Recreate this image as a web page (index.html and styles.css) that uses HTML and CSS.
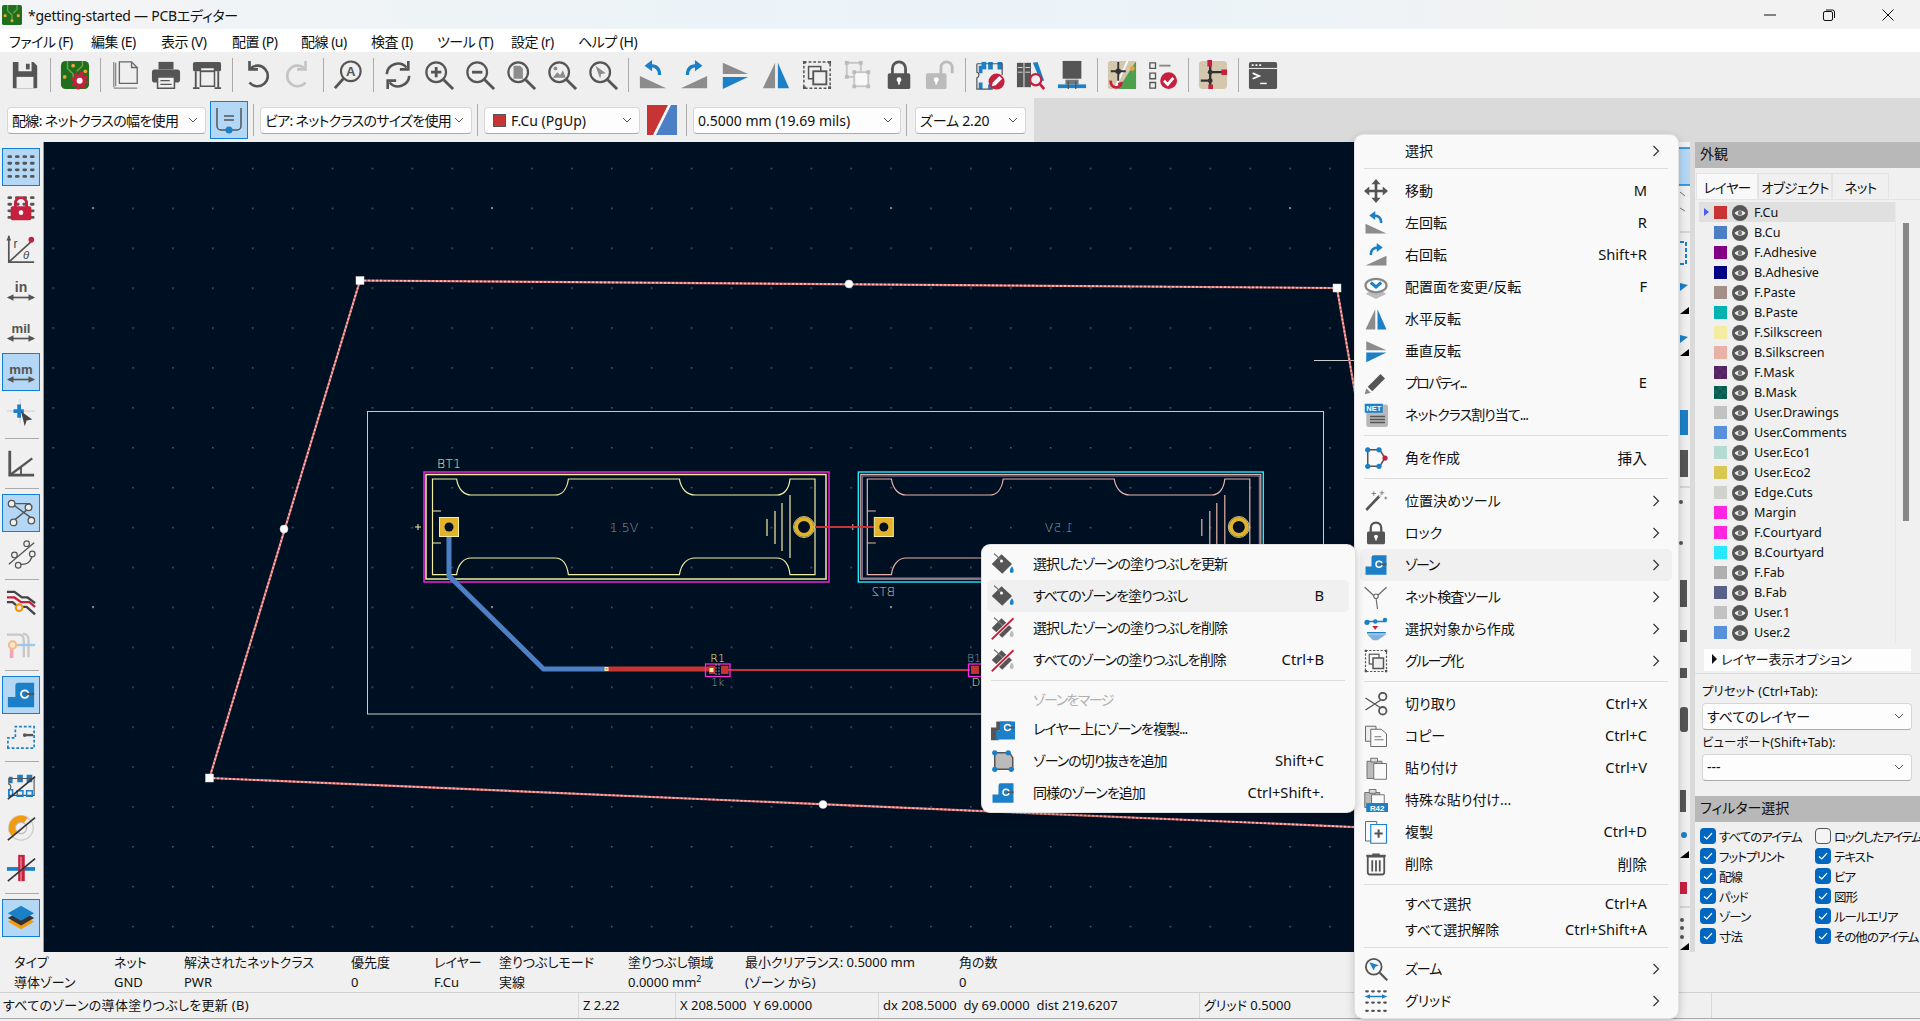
FILE: index.html
```html
<!DOCTYPE html>
<html lang="ja">
<head>
  <meta charset="utf-8">
  <title>*getting-started — PCBエディター</title>
  <link rel="stylesheet" href="styles.css">
</head>
<body>
<!-- icon sheet -->
<svg class="sheet">
  <symbol id="i-save" viewBox="0 0 32 32"><path d="M3 2h22l4 4v23a1 1 0 0 1-1 1H4a1 1 0 0 1-1-1z" fill="#555"/><path d="M9 2h14v10H9z" fill="#efefef"/><path d="M17 4h4v6h-4z" fill="#555"/><path d="M7 18h18v12H7z" fill="#efefef"/></symbol>
  <symbol id="i-pcbgear" viewBox="0 0 32 32"><rect x="1" y="1" width="30" height="30" rx="5" fill="#1f6f1f"/><path d="M8 1v8l6 6v5M24 1v5l-6 6" fill="none" stroke="#6da544" stroke-width="1.5"/><circle cx="5" cy="18" r="2" fill="#e8a33a"/><circle cx="14" cy="6" r="2" fill="#e8a33a"/><circle cx="27" cy="12" r="2" fill="#e8a33a"/><circle cx="21" cy="22" r="8" fill="none" stroke="#c7203f" stroke-width="3" stroke-dasharray="3.5 2.8"/><circle cx="21" cy="22" r="5" fill="#fff" stroke="#c7203f" stroke-width="3.6"/></symbol>
  <symbol id="i-page" viewBox="0 0 32 32"><path d="M10 2h13l6 6v17H10z" fill="none" stroke="#666" stroke-width="1.4"/><path d="M6 3v25M4 30h25M4 2v27" fill="none" stroke="#888" stroke-width="1.4"/><path d="M23 2v6h6" fill="none" stroke="#666" stroke-width="1.4"/></symbol>
  <symbol id="i-print" viewBox="0 0 32 32"><path d="M8 2h16v8H8z" fill="#555"/><rect x="1" y="10" width="30" height="14" rx="3" fill="#555"/><path d="M7 18h18v12H7z" fill="#efefef" stroke="#555" stroke-width="1.6"/><path d="M10 22h10M10 26h12" stroke="#555" stroke-width="1.2"/></symbol>
  <symbol id="i-plot" viewBox="0 0 32 32"><rect x="1" y="2" width="30" height="10" rx="2" fill="#555"/><path d="M4 12v17M28 12v17M1 30h7M24 30h7" stroke="#555" stroke-width="2" fill="none"/><path d="M9 8h15v20H9z" fill="#efefef" stroke="#555" stroke-width="1.6"/><path d="M9 12h15" stroke="#555" stroke-width="2"/></symbol>
  <symbol id="i-undo" viewBox="0 0 32 32"><path d="M9 9a11 11 0 1 1-1 15" fill="none" stroke="currentColor" stroke-width="2.8"/><path d="M8 1v9h9" fill="none" stroke="currentColor" stroke-width="2.8"/></symbol>
  <symbol id="i-redo" viewBox="0 0 32 32"><path d="M23 9a11 11 0 1 0 1 15" fill="none" stroke="currentColor" stroke-width="2.8"/><path d="M24 1v9h-9" fill="none" stroke="currentColor" stroke-width="2.8"/></symbol>
  <symbol id="i-find" viewBox="0 0 32 32"><circle cx="19" cy="12" r="10.5" fill="none" stroke="#555" stroke-width="2.2"/><path d="M11 20l-9 10" stroke="#555" stroke-width="3"/><text x="19" y="17" class="svgt" font-size="14" font-weight="700" text-anchor="middle" fill="#555">A</text></symbol>
  <symbol id="i-refresh" viewBox="0 0 32 32"><path d="M4 15A12 12 0 0 1 25 8M28 17A12 12 0 0 1 7 24" fill="none" stroke="#555" stroke-width="2.8"/><path d="M27 1v9h-9M5 31v-9h9" fill="none" stroke="#555" stroke-width="2.8"/></symbol>
  <symbol id="i-lens" viewBox="0 0 32 32"><circle cx="13" cy="13" r="10.5" fill="none" stroke="#555" stroke-width="2.4"/><path d="M21 21l10 10" stroke="#555" stroke-width="3"/></symbol>
  <symbol id="i-zin" viewBox="0 0 32 32"><use href="#i-lens"/><path d="M7.5 13h11M13 7.500v11" stroke="#555" stroke-width="3"/></symbol>
  <symbol id="i-zout" viewBox="0 0 32 32"><use href="#i-lens"/><path d="M7.500 13h11" stroke="#555" stroke-width="3"/></symbol>
  <symbol id="i-zfit" viewBox="0 0 32 32"><use href="#i-lens"/><path d="M8 6h7l3 3v11H8z" fill="#8c8c8c"/></symbol>
  <symbol id="i-zobj" viewBox="0 0 32 32"><use href="#i-lens"/><path d="M6 19l5-6 3 3 3-5 3 8z" fill="#8c8c8c"/><circle cx="9" cy="9" r="2" fill="#8c8c8c"/></symbol>
  <symbol id="i-zsel" viewBox="0 0 32 32"><use href="#i-lens"/><path d="M8 6l11 8-5 1-1 5z" fill="#8c8c8c"/></symbol>
  <symbol id="i-rotl" viewBox="0 0 32 32"><path d="M2 30V17l28 13z" fill="#8c8c8c"/><path d="M23 16c0-7-4-10-10-10" fill="none" stroke="#1b80c8" stroke-width="3.5"/><path d="M15 0L7 6l8 6z" fill="#1b80c8"/></symbol>
  <symbol id="i-rotr" viewBox="0 0 32 32"><path d="M30 30V17L2 30z" fill="#8c8c8c"/><path d="M9 16c0-7 4-10 10-10" fill="none" stroke="#1b80c8" stroke-width="3.5"/><path d="M17 0l8 6-8 6z" fill="#1b80c8"/></symbol>
  <symbol id="i-flipv" viewBox="0 0 32 32"><path d="M3 3l27 12H3z" fill="#8c8c8c"/><path d="M3 18h27L3 31z" fill="#1b80c8"/></symbol>
  <symbol id="i-fliph" viewBox="0 0 32 32"><path d="M15 3v27H2z" fill="#8c8c8c"/><path d="M18 3v27h12z" fill="#1b80c8"/></symbol>
  <symbol id="i-group" viewBox="0 0 32 32"><rect x="2" y="2" width="28" height="28" fill="none" stroke="#555" stroke-width="1.6" stroke-dasharray="3 2"/><path d="M1 1h3v3H1zM28 1h3v3h-3zM1 28h3v3H1zM28 28h3v3h-3z" fill="#555"/><rect x="7" y="7" width="13" height="13" fill="none" stroke="#555" stroke-width="1.6"/><rect x="12" y="12" width="14" height="14" fill="#efefef" stroke="#555" stroke-width="2"/></symbol>
  <symbol id="i-ungroup" viewBox="0 0 32 32"><rect x="4" y="3" width="15" height="15" fill="none" stroke="#c6c6c6" stroke-width="2"/><rect x="12" y="13" width="15" height="15" fill="#f8f8f8" stroke="#c6c6c6" stroke-width="2"/><path d="M2 1h4v4H2zM17 1h4v4h-4zM2 16h4v4H2zM10 11h4v4h-4zM25 11h4v4h-4zM10 26h4v4h-4zM25 26h4v4h-4z" fill="#bbb"/></symbol>
  <symbol id="i-lock" viewBox="0 0 32 32"><path d="M9 15V9a7 7 0 0 1 14 0v6" fill="none" stroke="#555" stroke-width="3"/><rect x="4" y="14" width="24" height="17" rx="2" fill="#555"/><circle cx="16" cy="21" r="2.6" fill="#fff"/><path d="M15 21h2v5h-2z" fill="#fff"/></symbol>
  <symbol id="i-unlock" viewBox="0 0 32 32"><path d="M17 15V8a6 6 0 0 1 12 0v6" fill="none" stroke="#bbb" stroke-width="3"/><rect x="1" y="14" width="22" height="17" rx="2" fill="#bbb"/><circle cx="12" cy="21" r="2.600" fill="#fff"/><path d="M11 21h2v5h-2z" fill="#fff"/></symbol>
  <symbol id="i-fped" viewBox="0 0 32 32"><path d="M4 6h4v8h-4zM14 2h5v8h-5zM24 2h5v8h-5zM4 24h4v7H4zM14 26h5v5h-5z" fill="#1b80c8" /><path d="M2 4h27v12M2 4v9c3 1 3 5 0 6v12h17" fill="none" stroke="#555" stroke-width="1.3"/><path d="M7 2h5v8H7z" fill="#1b80c8"/><circle cx="23" cy="23" r="8.500" fill="#c7203f"/><path d="M18 28l1-4 7-7 3 3-7 7z" fill="#fff"/></symbol>
  <symbol id="i-lib" viewBox="0 0 32 32"><rect x="1" y="3" width="7" height="26" fill="#555"/><rect x="9" y="3" width="7" height="26" fill="#555"/><path d="M18 3l5-1 7 20h-4z" fill="#1b80c8"/><path d="M2 8h5M2 13h5M10 8h5M10 13h5" stroke="#ddd"/><circle cx="21" cy="21" r="6" fill="#efefef" stroke="#c7203f" stroke-width="2.4"/><path d="M25 25l5 6" stroke="#c7203f" stroke-width="3"/></symbol>
  <symbol id="i-fp" viewBox="0 0 32 32"><path d="M6 1h20v19H6z" fill="#555"/><path d="M9 21h14v5H9z" fill="#777"/><path d="M1 26h30v4H1z" fill="#1b80c8"/><path d="M12 23v8M20 23v8" stroke="#555" stroke-width="1.4"/></symbol>
  <symbol id="i-update" viewBox="0 0 32 32"><rect x="1" y="1" width="30" height="30" rx="3" fill="#d3c7ae"/><path d="M31 1v30H12z" fill="#4ea04e"/><path d="M22 1L8 31" stroke="#fff" stroke-width="2"/><path d="M12 2v9M4 12h16M12 14v8" stroke="#333" stroke-width="2"/><circle cx="12" cy="12" r="3" fill="#333"/><circle cx="27" cy="9" r="2.600" fill="#e8a33a"/><path d="M4 22c-1 8 10 10 11 3l-3 1" fill="none" stroke="#c7203f" stroke-width="3"/></symbol>
  <symbol id="i-drc" viewBox="0 0 32 32"><path d="M2 3h6v6H2zM2 14h6v6H2zM2 24h6v6H2z" fill="none" stroke="#555" stroke-width="1.4"/><path d="M12 6h12" stroke="#888" stroke-width="2"/><circle cx="22" cy="22" r="9" fill="#c7203f"/><path d="M17 22l4 4 6-7" fill="none" stroke="#fff" stroke-width="3"/></symbol>
  <symbol id="i-sch" viewBox="0 0 32 32"><rect x="1" y="1" width="30" height="30" rx="4" fill="#d3c7ae"/><path d="M13 3v26M3 22h10M13 13h15" stroke="#333" stroke-width="2.500" fill="none"/><path d="M10 0h5v7h-5zM25 10h6v6h-6zM11 26h5v5h-5z" fill="#c7203f"/><circle cx="13" cy="13" r="2.600" fill="#333"/><circle cx="13" cy="22" r="2.600" fill="#333"/></symbol>
  <symbol id="i-term" viewBox="0 0 32 32"><rect x="1" y="2" width="30" height="29" rx="2" fill="#555"/><path d="M1 9h30" stroke="#fff"/><path d="M4 5.500h2M8 5.500h2M12 5.500h2" stroke="#fff" stroke-width="2"/><path d="M5 14l7 3-7 3" fill="none" stroke="#fff" stroke-width="1.800"/><path d="M13 25h7" stroke="#fff" stroke-width="1.600"/></symbol>

  <symbol id="i-dots" viewBox="0 0 32 32"><path d="M3 5h2M11 5h2M19 5h2M27 5h2M3 12h2M11 12h2M19 12h2M27 12h2M3 19h2M11 19h2M19 19h2M27 19h2M3 26h2M11 26h2M19 26h2M27 26h2" stroke="#555" stroke-width="3" stroke-linecap="round"/></symbol>
  <symbol id="i-gridlock" viewBox="0 0 32 32"><use href="#i-dots"/><path d="M10 15v-4a6 6 0 0 1 12 0v4" fill="none" stroke="#c7203f" stroke-width="3"/><rect x="5" y="14" width="22" height="15" rx="2" fill="#c7203f"/><circle cx="16" cy="21" r="2.500" fill="#fff"/></symbol>
  <symbol id="i-polar" viewBox="0 0 32 32"><path d="M3 2v28h27M3 30L28 7" fill="none" stroke="#555" stroke-width="1.800"/><path d="M3 1l-2.500 6h5z" fill="#555"/><circle cx="27" cy="6" r="3" fill="#c7203f"/><text x="8" y="15" class="svgt" font-size="13" fill="#444">r</text><text x="18" y="27" class="svgt" font-size="12" font-style="italic" fill="#444">θ</text></symbol>
  <symbol id="i-arrow2" viewBox="0 0 32 32"><path d="M3 24h26" stroke="#555" stroke-width="1.800"/><path d="M1 24l7-3.500v7zM31 24l-7-3.500v7z" fill="#555"/></symbol>
  <symbol id="i-in" viewBox="0 0 32 32"><use href="#i-arrow2"/><text x="16" y="18" class="svgt" font-size="15" font-weight="700" text-anchor="middle" fill="#555">in</text></symbol>
  <symbol id="i-mil" viewBox="0 0 32 32"><use href="#i-arrow2"/><text x="16" y="18" class="svgt" font-size="14" font-weight="700" text-anchor="middle" fill="#555">mil</text></symbol>
  <symbol id="i-mm" viewBox="0 0 32 32"><use href="#i-arrow2"/><text x="16" y="18" class="svgt" font-size="14" font-weight="700" text-anchor="middle" fill="#555">mm</text></symbol>
  <symbol id="i-cursor" viewBox="0 0 32 32"><path d="M1 14h30M15 1v26" stroke="#ccc"/><path d="M8 12h11v4H8zM12 7h4v14h-4z" fill="#1b80c8"/><path d="M16 14l12 9-6 1-2 6z" fill="#444"/></symbol>
  <symbol id="i-origin" viewBox="0 0 32 32"><path d="M4 3v26h26" fill="none" stroke="#555" stroke-width="3"/><path d="M4 29L28 11" stroke="#555" stroke-width="2.500"/><path d="M16 20v9" stroke="#555" stroke-width="2"/></symbol>
  <symbol id="i-rats" viewBox="0 0 32 32"><path d="M6 6l22 16M6 26L28 8M6 6h20" fill="none" stroke="#555" stroke-width="1.500"/><circle cx="6" cy="6" r="3.500" fill="#efefef" stroke="#555" stroke-width="1.400"/><circle cx="24" cy="10" r="3.500" fill="#efefef" stroke="#555" stroke-width="1.400"/><circle cx="8" cy="26" r="3.500" fill="#efefef" stroke="#555" stroke-width="1.400"/><circle cx="27" cy="24" r="3.500" fill="#efefef" stroke="#555" stroke-width="1.400"/></symbol>
  <symbol id="i-curve" viewBox="0 0 32 32"><path d="M3 27L30 4" stroke="#555" stroke-width="1.400"/><path d="M11 27h6c8 0 11-6 11-12" fill="none" stroke="#555" stroke-width="1.400"/><circle cx="22" cy="5" r="3" fill="#efefef" stroke="#555" stroke-width="1.300"/><circle cx="9" cy="17" r="3" fill="#efefef" stroke="#555" stroke-width="1.300"/><circle cx="13" cy="28" r="3" fill="#efefef" stroke="#555" stroke-width="1.300"/><circle cx="28" cy="16" r="3" fill="#efefef" stroke="#555" stroke-width="1.300"/></symbol>
  <symbol id="i-tracks" viewBox="0 0 32 32"><path d="M1 3h8l8 6h6l8 6M1 14h6l6 5h9l9 8" fill="none" stroke="#444" stroke-width="2.500"/><path d="M1 9h8l7 5h9l6 5" fill="none" stroke="#c7203f" stroke-width="2.500"/><circle cx="14" cy="20" r="3.500" fill="#efefef" stroke="#f39a0f" stroke-width="2.400"/></symbol>
  <symbol id="i-ghost" viewBox="0 0 32 32"><path d="M1 5h13c4 0 5 3 5 7v17M24 29V10c0-4-3-6-6-6" fill="none" stroke="#c8c8c8" stroke-width="2.500"/><path d="M12 16h19" stroke="#9cc8ec" stroke-width="2.500"/><path d="M6 20v10" stroke="#f0a8b8" stroke-width="4"/><circle cx="7" cy="16" r="4" fill="#fbe7d0" stroke="#f5b97f" stroke-width="2"/></symbol>
  <symbol id="i-zone" viewBox="0 0 32 32"><path d="M2 29V18h8V6a3 3 0 0 1 3-3h17v26z" fill="#1b80c8"/><circle cx="20" cy="15" r="4" fill="#1b80c8" stroke="#fff" stroke-width="2"/><path d="M21 15h9" stroke="#555" stroke-width="2.500"/></symbol>
  <symbol id="i-zonedash" viewBox="0 0 32 32"><path d="M2 29V18h8V6h20v23z" fill="none" stroke="#1b80c8" stroke-width="1.800" stroke-dasharray="3 2"/><circle cx="20" cy="15" r="2" fill="#555"/><path d="M20 15h9" stroke="#555" stroke-width="2.500"/></symbol>
  <symbol id="i-slash" viewBox="0 0 32 32"><path d="M2 30L31 6" stroke="#333" stroke-width="1.800"/></symbol>
  <symbol id="i-nofp" viewBox="0 0 32 32"><path d="M3 6h4v7H3zM12 4h6v8h-6zM22 4h6v8h-6z" fill="#1b80c8"/><path d="M3 8h27v18H3v-6c3-1 3-5 0-6z" fill="none" stroke="#555" stroke-width="1.200"/><path d="M3 20h4v7H3zM12 21h6v6h-6zM22 21h6v6h-6z" fill="none" stroke="#1b80c8" stroke-width="1.600"/><use href="#i-slash"/></symbol>
  <symbol id="i-nopad" viewBox="0 0 32 32"><circle cx="16" cy="17" r="13" fill="none" stroke="#ccc" stroke-width="1.400"/><path d="M3 17a13 13 0 0 1 20-11l-4 6a6 6 0 0 0-9 6l-7 3z" fill="#f39a0f"/><path d="M3 18a13 13 0 0 0 3 7l7-4a6 6 0 0 1-3-4z" fill="#f39a0f"/><circle cx="16" cy="17" r="6" fill="none" stroke="#bbb" stroke-width="1.400"/><use href="#i-slash"/></symbol>
  <symbol id="i-novia" viewBox="0 0 32 32"><path d="M1 17h30" stroke="#1b80c8" stroke-width="4"/><path d="M13 2h7v28h-7z" fill="#c7203f"/><path d="M16 4v26" stroke="#f0c0c8" stroke-width="1"/><use href="#i-slash"/></symbol>
  <symbol id="i-layers" viewBox="0 0 32 32"><path d="M16 12l14 8-14 8-14-8z" fill="#f39a0f"/><path d="M16 8l14 8-14 8-14-8z" fill="#333"/><path d="M16 3l14 8-14 8-14-8z" fill="#1b80c8"/></symbol>

  <symbol id="i-move" viewBox="0 0 32 32"><path d="M16 0l-6 7h12zM16 32l-6-7h12zM0 16l7-6v12zM32 16l-7-6v12z" fill="#555"/><path d="M6 16h20M16 6v20" stroke="#555" stroke-width="3.500"/></symbol>
  <symbol id="i-flip" viewBox="0 0 32 32"><path d="M16 18l14 7-14 7-14-7z" fill="#bbb"/><ellipse cx="16" cy="14" rx="14" ry="9" fill="#fff" stroke="#888" stroke-width="3"/><path d="M9 10l7 6 7-6" fill="none" stroke="#1b80c8" stroke-width="4"/></symbol>
  <symbol id="i-pencil" viewBox="0 0 32 32"><path d="M5 21L22 4l6 6-17 17z" fill="#555"/><path d="M3 23l6 6-8 2z" fill="#888"/></symbol>
  <symbol id="i-net" viewBox="0 0 32 32"><rect x="3" y="2" width="29" height="30" rx="3" fill="#b8b8b8"/><rect x="1" y="1" width="24" height="12" fill="#1b80c8"/><text x="13" y="11" class="svgt" font-size="10" font-weight="700" text-anchor="middle" fill="#fff">NET</text><path d="M8 18h20M8 22h20M8 26h20" stroke="#555" stroke-width="2"/></symbol>
  <symbol id="i-corner" viewBox="0 0 32 32"><path d="M5 5h16l7 11-7 11H5z" fill="none" stroke="#555" stroke-width="2"/><circle cx="5" cy="5" r="3.500" fill="#1b80c8"/><circle cx="5" cy="27" r="3.500" fill="#1b80c8"/><circle cx="20" cy="5" r="3.500" fill="#1b80c8"/><circle cx="20" cy="27" r="3.500" fill="#1b80c8"/><circle cx="28" cy="16" r="3.500" fill="#c7203f"/></symbol>
  <symbol id="i-wand" viewBox="0 0 32 32"><path d="M3 28L21 9" stroke="#555" stroke-width="3.500"/><path d="M20 10l3-3" stroke="#ddd" stroke-width="3"/><path d="M10 6h6M13 3v6M24 2v6M21 5h6M27 12h4M29 10v4" stroke="#666" stroke-width="1"/></symbol>
  <symbol id="i-netinsp" viewBox="0 0 32 32"><path d="M15 16L1 3M16 16l14-13M16 17l2 15" stroke="#666" stroke-width="1.500"/><circle cx="16" cy="15" r="3" fill="#fff" stroke="#666" stroke-width="1.500"/></symbol>
  <symbol id="i-create" viewBox="0 0 32 32"><path d="M3 6h26" stroke="#1b80c8" stroke-width="2"/><circle cx="4" cy="7" r="3.500" fill="#1b80c8"/><circle cx="15" cy="6" r="3" fill="#1b80c8"/><circle cx="28" cy="4" r="3" fill="#1b80c8"/><path d="M11 12h8l-4 5z" fill="#c7203f"/><path d="M4 20h25v2H4z" fill="#1b80c8"/><path d="M4 23h26L18 31h-6z" fill="#7fb3dd"/></symbol>
  <symbol id="i-cut" viewBox="0 0 32 32"><path d="M2 8l20 13M2 24l20-13" stroke="#555" stroke-width="1.800"/><circle cx="25" cy="6" r="5" fill="none" stroke="#555" stroke-width="2.400"/><circle cx="25" cy="25" r="5" fill="none" stroke="#555" stroke-width="2.400"/></symbol>
  <symbol id="i-copy" viewBox="0 0 32 32"><path d="M2 3h14v20H2z" fill="#eee" stroke="#666" stroke-width="1.300"/><path d="M9 7h14l7 6v17H9z" fill="#fafafa" stroke="#666" stroke-width="1.300"/><path d="M14 17h9M14 21h12" stroke="#666" stroke-width="1.200"/></symbol>
  <symbol id="i-paste" viewBox="0 0 32 32"><path d="M4 7h20v23H4z" fill="#bbb" stroke="#666" stroke-width="1.200"/><path d="M9 3h9v5H9z" fill="#ddd" stroke="#666" stroke-width="1.200"/><path d="M13 10h17v21H13z" fill="#fafafa" stroke="#666" stroke-width="1.200"/></symbol>
  <symbol id="i-pastesp" viewBox="0 0 32 32"><path d="M1 6h20v20H1z" fill="#bbb" stroke="#666" stroke-width="1.200"/><path d="M7 2h9v5H7z" fill="#ddd" stroke="#666" stroke-width="1.200"/><path d="M10 9h17v14H10z" fill="#fafafa" stroke="#666" stroke-width="1.200"/><rect x="3" y="20" width="29" height="12" fill="#1b80c8"/><text x="17.500" y="30" class="svgt" font-size="10.500" font-weight="700" text-anchor="middle" fill="#fff">R42</text></symbol>
  <symbol id="i-dup" viewBox="0 0 32 32"><path d="M2 2h15v26H2z" fill="#fafafa" stroke="#666" stroke-width="1.300"/><path d="M9 6h21v25H9z" fill="#fafafa" stroke="#1b80c8" stroke-width="1.500"/><path d="M14 18h11M19.500 12.500v11" stroke="#555" stroke-width="2.800"/></symbol>
  <symbol id="i-trash" viewBox="0 0 32 32"><path d="M5 6h22v21a3 3 0 0 1-3 3H8a3 3 0 0 1-3-3z" fill="none" stroke="#555" stroke-width="2.400"/><path d="M3 5h26" stroke="#555" stroke-width="2.600"/><path d="M11 3h10" stroke="#555" stroke-width="2"/><path d="M11 11v15M16 11v15M21 11v15" stroke="#555" stroke-width="2.400"/></symbol>
  <symbol id="i-zcur" viewBox="0 0 32 32"><use href="#i-lens"/><path d="M7 7l13 4-5 2-2 5z" fill="#1b80c8"/></symbol>
  <symbol id="i-gridm" viewBox="0 0 32 32"><path d="M3 3h2M11 3h2M19 3h2M27 3h2M3 18h2M11 18h2M19 18h2M27 18h2M3 29h2M11 29h2M19 29h2M27 29h2" stroke="#555" stroke-width="3" stroke-linecap="round"/><path d="M6 10h20" stroke="#1b80c8" stroke-width="2"/><path d="M1 10l7-3v6zM31 10l-7-3v6z" fill="#1b80c8"/></symbol>
  <symbol id="i-bucket" viewBox="0 0 32 32"><path d="M1 16L14 3l14 13-13 13z" fill="#555"/><path d="M4 2l12 11" stroke="#777" stroke-width="1.500"/><circle cx="14" cy="12" r="2" fill="#fff"/><path d="M28 19c3 4 3 9-.5 9s-3-5 .5-9z" fill="#1b80c8"/></symbol>
  <symbol id="i-unfill" viewBox="0 0 32 32"><path d="M1 16L14 3l14 13-13 13z" fill="#555"/><path d="M4 2l12 11" stroke="#777" stroke-width="1.500"/><path d="M28 19c3 4 3 9-.5 9s-3-5 .5-9z" fill="#bbb"/><path d="M1 31L30 3" stroke="#fafafa" stroke-width="5"/><path d="M1 31L30 3" stroke="#c7203f" stroke-width="2.400"/></symbol>
  <symbol id="i-zonedup" viewBox="0 0 32 32"><path d="M0 14h7V6h20v12H10v13H0z" fill="#555"/><path d="M7 29V18h5V6h20v24H7z" fill="#1b80c8"/><circle cx="22" cy="14" r="4" fill="#1b80c8" stroke="#fff" stroke-width="2"/><path d="M23 14h8" stroke="#555" stroke-width="2.500"/></symbol>
  <symbol id="i-cutout" viewBox="0 0 32 32"><path d="M5 5h20l4 7v15H5z" fill="#bbb" stroke="#555" stroke-width="2"/><circle cx="5" cy="5" r="3.500" fill="#1b80c8"/><circle cx="23" cy="5" r="3.500" fill="#1b80c8"/><circle cx="5" cy="27" r="3.500" fill="#1b80c8"/><circle cx="27" cy="27" r="3.500" fill="#1b80c8"/></symbol>

  <symbol id="i-eye" viewBox="0 0 16 16"><circle cx="8" cy="8" r="8" fill="#555"/><path d="M2.500 8C5 4.500 11 4.500 13.500 8 11 11.500 5 11.500 2.500 8z" fill="#eee"/><circle cx="8" cy="8" r="2.200" fill="#777"/></symbol>
  <symbol id="i-check" viewBox="0 0 16 16"><path d="M4 8.500l2.800 2.500L12 5.200" fill="none" stroke="#fff" stroke-width="1.200"/></symbol>
  <symbol id="i-chev" viewBox="0 0 12 12"><path d="M2 4l4 4 4-4" fill="none" stroke="#555" stroke-width="1"/></symbol>
  <symbol id="i-more" viewBox="0 0 8 12"><path d="M1.500 1l5 5-5 5" fill="none" stroke="#333" stroke-width="1.200"/></symbol>
</svg>

<header class="titlebar">
  <svg class="appicon" viewBox="0 0 32 32"><rect width="32" height="32" rx="3" fill="#1f6f1f"/><path d="M9 0v9l7 7v8M24 0v7l-6 6" fill="none" stroke="#6da544" stroke-width="2"/><circle cx="5" cy="17" r="2.500" fill="#e8a33a"/><circle cx="26" cy="17" r="2.500" fill="#e8a33a"/><circle cx="16" cy="25" r="2.500" fill="#e8a33a"/></svg>
  <span class="apptitle">*getting-started — PCBエディター</span>
  <div class="winbtns">
    <svg viewBox="0 0 12 12"><path d="M0 6h12" stroke="#111" stroke-width="1"/></svg>
    <svg viewBox="0 0 12 12"><rect x="0.500" y="2.500" width="9" height="9" rx="1.500" fill="none" stroke="#111"/><path d="M3 1h6.500A2 2 0 0 1 11.500 3v6" fill="none" stroke="#111"/></svg>
    <svg viewBox="0 0 12 12"><path d="M0.500 0.500l11 11M11.500 0.500l-11 11" stroke="#111" stroke-width="1"/></svg>
  </div>
</header>

<nav class="menubar">
  <span class="m1">ファイル (F)</span><span class="m2">編集 (E)</span><span class="m3">表示 (V)</span><span class="m4">配置 (P)</span><span class="m5">配線 (u)</span><span class="m6">検査 (I)</span><span class="m7">ツール (T)</span><span class="m8">設定 (r)</span><span class="m9">ヘルプ (H)</span>
</nav>

<div class="toolbar">
  <button class="tb"><svg><use href="#i-save"/></svg></button>
  <i class="vs"></i>
  <button class="tb"><svg><use href="#i-pcbgear"/></svg></button>
  <i class="vs"></i>
  <button class="tb"><svg><use href="#i-page"/></svg></button>
  <button class="tb"><svg><use href="#i-print"/></svg></button>
  <button class="tb"><svg><use href="#i-plot"/></svg></button>
  <i class="vs"></i>
  <button class="tb dark"><svg><use href="#i-undo"/></svg></button>
  <button class="tb pale"><svg><use href="#i-redo"/></svg></button>
  <i class="vs"></i>
  <button class="tb"><svg><use href="#i-find"/></svg></button>
  <i class="vs"></i>
  <button class="tb"><svg><use href="#i-refresh"/></svg></button>
  <button class="tb"><svg><use href="#i-zin"/></svg></button>
  <button class="tb"><svg><use href="#i-zout"/></svg></button>
  <button class="tb"><svg><use href="#i-zfit"/></svg></button>
  <button class="tb"><svg><use href="#i-zobj"/></svg></button>
  <button class="tb"><svg><use href="#i-zsel"/></svg></button>
  <i class="vs"></i>
  <button class="tb"><svg><use href="#i-rotl"/></svg></button>
  <button class="tb"><svg><use href="#i-rotr"/></svg></button>
  <button class="tb"><svg><use href="#i-flipv"/></svg></button>
  <button class="tb"><svg><use href="#i-fliph"/></svg></button>
  <button class="tb"><svg><use href="#i-group"/></svg></button>
  <button class="tb"><svg><use href="#i-ungroup"/></svg></button>
  <button class="tb"><svg><use href="#i-lock"/></svg></button>
  <button class="tb"><svg><use href="#i-unlock"/></svg></button>
  <i class="vs"></i>
  <button class="tb"><svg><use href="#i-fped"/></svg></button>
  <button class="tb"><svg><use href="#i-lib"/></svg></button>
  <button class="tb"><svg><use href="#i-fp"/></svg></button>
  <i class="vs"></i>
  <button class="tb"><svg><use href="#i-update"/></svg></button>
  <button class="tb"><svg><use href="#i-drc"/></svg></button>
  <i class="vs"></i>
  <button class="tb"><svg><use href="#i-sch"/></svg></button>
  <i class="vs"></i>
  <button class="tb"><svg><use href="#i-term"/></svg></button>
</div>

<div class="optbar">
  <div class="opts">
    <div class="sel w1">配線: ネットクラスの幅を使用<svg><use href="#i-chev"/></svg></div>
    <button class="lenbtn"><svg viewBox="0 0 30 30"><path d="M3 3v18a4 4 0 0 0 4 4h16a4 4 0 0 0 4-4V3" fill="none" stroke="#555" stroke-width="1.500"/><path d="M10 11h10M10 15h10" stroke="#555" stroke-width="1.500"/><circle cx="15" cy="25" r="3.500" fill="#1b80c8"/></svg></button>
    <i class="hs"></i>
    <div class="sel w2">ビア: ネットクラスのサイズを使用<svg><use href="#i-chev"/></svg></div>
    <i class="hs"></i>
    <div class="sel w3"><b class="chip"></b>F.Cu (PgUp)<svg><use href="#i-chev"/></svg></div>
    <svg class="pair" viewBox="0 0 30 30"><path d="M0 0h21L6 30H0z" fill="#c83434"/><path d="M30 0v30H9L24 0z" fill="#4d7fc4"/><path d="M22.500 0L7.500 30" stroke="#fff" stroke-width="2" stroke-dasharray="2 1"/></svg>
    <i class="hs"></i>
    <div class="sel w4">0.5000 mm (19.69 mils)<svg><use href="#i-chev"/></svg></div>
    <i class="hs"></i>
    <div class="sel w5">ズーム 2.20<svg><use href="#i-chev"/></svg></div>
  </div>
</div>

<div class="main">
  <aside class="lefttb">
    <button class="lb on"><svg><use href="#i-dots"/></svg></button>
    <button class="lb"><svg><use href="#i-gridlock"/></svg></button>
    <button class="lb"><svg><use href="#i-polar"/></svg></button>
    <button class="lb"><svg><use href="#i-in"/></svg></button>
    <button class="lb"><svg><use href="#i-mil"/></svg></button>
    <button class="lb on"><svg><use href="#i-mm"/></svg></button>
    <button class="lb"><svg><use href="#i-cursor"/></svg></button>
    <i class="ls"></i>
    <button class="lb"><svg><use href="#i-origin"/></svg></button>
    <i class="ls"></i>
    <button class="lb on"><svg><use href="#i-rats"/></svg></button>
    <button class="lb"><svg><use href="#i-curve"/></svg></button>
    <i class="ls"></i>
    <button class="lb"><svg><use href="#i-tracks"/></svg></button>
    <button class="lb"><svg><use href="#i-ghost"/></svg></button>
    <i class="ls"></i>
    <button class="lb on"><svg><use href="#i-zone"/></svg></button>
    <button class="lb"><svg><use href="#i-zonedash"/></svg></button>
    <i class="ls"></i>
    <button class="lb"><svg><use href="#i-nofp"/></svg></button>
    <button class="lb"><svg><use href="#i-nopad"/></svg></button>
    <button class="lb"><svg><use href="#i-novia"/></svg></button>
    <i class="ls"></i>
    <button class="lb on"><svg><use href="#i-layers"/></svg></button>
  </aside>

  <div class="canvas">
    <svg viewBox="44 142 1605 810">
      <defs>
        <pattern id="grid" x="52.400" y="167.700" width="39.900" height="39.900" patternUnits="userSpaceOnUse"><rect width="1.500" height="1.500" fill="#566170"/></pattern>
        <pattern id="gridb" x="491" y="606" width="399" height="399" patternUnits="userSpaceOnUse"><rect x="-1" y="-1" width="3" height="3" fill="#7a838d"/></pattern>
        <path id="batbody" d="M432.500 479H456.600C458 489 464 495 471 495H555C562 495 567 489 568.400 479H679.400C681 489 687 495 695 495H777C784 495 789 489 790 479H815V574.700H790C789 564 784 558 777 558H695C687 558 681 564 679.400 574.700H568.400C567 564 562 558 555 558H471C464 558 458 564 456.600 574.700H432.500Z M432.500 511H441M432.500 543H441"/>
        <g id="batlines"><path d="M767 519V536M775 511V544M782 503V551M790 495V558"/></g>
      </defs>
      <rect x="44" y="142" width="1605" height="810" fill="#001023"/>
      <rect x="44" y="142" width="1605" height="810" fill="url(#grid)"/>
      <rect x="44" y="142" width="1605" height="810" fill="url(#gridb)"/>

      <!-- edge cuts -->
      <rect x="367.500" y="411.500" width="956" height="302.500" class="edge"/>
      <path d="M1314 360.500H1355" class="edge"/>

      <!-- BT2 -->
      <g transform="translate(434.800 0)">
        <rect x="423.500" y="472" width="405" height="110" fill="none" stroke="#26e9ff" stroke-width="1.400"/>
        <rect x="426" y="474.500" width="400" height="104.500" fill="none" stroke="#e8b2a7" stroke-width="1.200"/>
        <rect x="427.500" y="476" width="397" height="102" fill="none" stroke="#8a88b0" stroke-width="1"/>
        <use href="#batbody" fill="none" stroke="#e8b2a7" stroke-width="1.200"/>
        <use href="#batlines" fill="none" stroke="#e8b2a7" stroke-width="1.200"/>
        <path d="M415 527h6M418 524v6" stroke="#e8b2a7"/>
        <rect x="439.500" y="517.500" width="19" height="19" fill="#e2b32a" stroke="#f2eda1"/>
        <circle cx="449" cy="527" r="4.500" fill="#001023"/>
        <circle cx="804" cy="527" r="8" fill="none" stroke="#e2b32a" stroke-width="4"/>
        <circle cx="804" cy="527" r="4" fill="#001023"/>
        <circle cx="804" cy="527" r="10.500" fill="none" stroke="#f2eda1" stroke-width="0.800"/>
      </g>
      <text class="pcbt" transform="translate(1059 532) scale(-1 1)" text-anchor="middle" fill="#8d97a0">1.5V</text>
      <text class="pcbt" transform="translate(883 595.500) scale(-1 1)" text-anchor="middle" fill="#e8b2a7">BT2</text>

      <!-- BT1 -->
      <rect x="424" y="472" width="405" height="110" fill="none" stroke="#ff26e2" stroke-width="1.400"/>
      <rect x="426" y="474.500" width="400" height="104.500" fill="none" stroke="#f2eda1" stroke-width="1.500"/>
      <use href="#batbody" fill="none" stroke="#f2eda1" stroke-width="1.200"/>
      <use href="#batlines" fill="none" stroke="#f2eda1" stroke-width="1.200"/>
      <path d="M415 527h6M418 524v6" stroke="#f2eda1"/>
      <text class="pcbt" x="449" y="468" text-anchor="middle" fill="#f2eda1">BT1</text>
      <text class="pcbt" x="624" y="532" text-anchor="middle" fill="#8d97a0">1.5V</text>

      <!-- tracks -->
      <path d="M813 527H874" stroke="#c83434" stroke-width="2" fill="none"/>
      <path d="M449 527V576L543.500 669H607" stroke="#4d7fc4" stroke-width="5" fill="none"/>
      <path d="M607 669H712" stroke="#c83434" stroke-width="5" fill="none"/>
      <path d="M728 670H970" stroke="#c83434" stroke-width="2" fill="none"/>

      <rect x="439.500" y="517.500" width="19" height="19" fill="#e2b32a" stroke="#f2eda1"/>
      <circle cx="449" cy="527" r="4.500" fill="#001023"/>
      <circle cx="804" cy="527" r="8" fill="none" stroke="#e2b32a" stroke-width="4"/>
      <circle cx="804" cy="527" r="4" fill="#001023"/>
      <circle cx="804" cy="527" r="10.500" fill="none" stroke="#f2eda1" stroke-width="0.800"/>
      <rect x="604.500" y="667" width="4" height="4" fill="#f2eda1"/>
      <rect x="605.500" y="668" width="2" height="2" fill="#e8a33a"/>

      <!-- R1 and the part under the menu -->
      <rect x="705.500" y="664" width="24.500" height="12.500" fill="none" stroke="#ff26e2" stroke-width="1.300"/>
      <rect x="721" y="666" width="7.500" height="8" fill="#c83434"/>
      <rect x="709" y="666" width="6" height="8" fill="#c83434"/>
      <rect x="709.500" y="668" width="4" height="4" fill="#f2eda1"/>
      <path d="M716 664v13M719 664v13" stroke="#aab" stroke-width="0.800" stroke-dasharray="2 1"/>
      <text class="pcbt small" x="717.600" y="662" text-anchor="middle" fill="#f2eda1">R1</text>
      <text class="pcbt small" x="717.600" y="686" text-anchor="middle" fill="#8d97a0">1k</text>
      <rect x="968.500" y="664" width="20" height="12.500" fill="none" stroke="#ff26e2" stroke-width="1.300"/>
      <rect x="971" y="666" width="8" height="8" fill="#c83434"/>
      <text class="pcbt small" x="974" y="662" text-anchor="middle" fill="#8d97a0">B1</text>
      <text class="pcbt small" x="976" y="686" text-anchor="middle" fill="#f2eda1">D</text>

      <!-- selected zone outline -->
      <path d="M360 280.500L1337 288L1355 393L1400 829L209.500 778Z" fill="none" stroke="#d86a6a" stroke-width="2.200"/>
      <path d="M360 280.500L1337 288L1355 393L1400 829L209.500 778Z" fill="none" stroke="#f3bcbc" stroke-width="1.600" stroke-dasharray="2 2"/>
      <rect x="356" y="276.500" width="8" height="8" class="hdl"/>
      <rect x="1333" y="284" width="8" height="8" class="hdl"/>
      <rect x="205.500" y="774" width="8" height="8" class="hdl"/>
      <circle cx="849" cy="284" r="4" class="hdl"/>
      <circle cx="284" cy="529" r="4" class="hdl"/>
      <circle cx="823" cy="804.500" r="4" class="hdl"/>
    </svg>
  </div>

  <aside class="righttb">
    <svg viewBox="0 0 41 810">
      <rect x="5" y="6" width="37" height="37" fill="#b3d7f5" stroke="#0f7fd8" stroke-width="1.500"/>
      <path d="M31 90h10" stroke="#bbb"/>
      <path d="M31 50l5 4M31 66l5 3" stroke="#777"/>
      <path d="M31 100h6M37 100v22M31 122h6" fill="none" stroke="#1b80c8" stroke-width="2" stroke-dasharray="4 2"/>
      <path d="M31 141l8 2-8 6z" fill="#1b80c8"/><path d="M40 165v7h-9z" fill="#000"/>
      <path d="M31 193l8 2-8 6z" fill="#1b80c8"/><path d="M40 207v7h-9z" fill="#000"/>
      <path d="M31 268h8v25h-8z" fill="#1b80c8"/><rect x="31" y="308" width="8" height="27" fill="#555"/>
      <path d="M31 345h10" stroke="#bbb"/>
      <circle cx="32" cy="360" r="2" fill="#555"/><circle cx="32" cy="401" r="2" fill="#555"/>
      <rect x="31" y="438" width="7" height="27" fill="#555"/><rect x="31" y="488" width="7" height="12" fill="#555"/><rect x="31" y="526" width="7" height="10" fill="#555"/>
      <rect x="31" y="565" width="8" height="25" rx="3" fill="#555"/><rect x="31" y="648" width="6" height="22" fill="#555"/>
      <circle cx="35" cy="693" r="3" fill="#1b80c8"/><path d="M40 709v7h-9z" fill="#000"/>
      <path d="M31 740h7v12h-7z" fill="#c7203f"/><path d="M31 765h10" stroke="#bbb"/>
      <circle cx="33" cy="778" r="2" fill="#555"/><circle cx="33" cy="786" r="2" fill="#555"/><circle cx="33" cy="795" r="2" fill="#555"/><path d="M40 801v7h-9z" fill="#000"/>
    </svg>
  </aside>

  <section class="panel">
    <h2 class="phead">外観</h2>
    <div class="tabs"><span class="tab cur">レイヤー</span><span class="tab t2">オブジェクト</span><span class="tab t3">ネット</span></div>
    <div class="layerbox">
      <ul class="layers">
        <li class="cur"><b class="s fcu"></b><svg><use href="#i-eye"/></svg>F.Cu</li>
        <li><b class="s bcu"></b><svg><use href="#i-eye"/></svg>B.Cu</li>
        <li><b class="s fadh"></b><svg><use href="#i-eye"/></svg>F.Adhesive</li>
        <li><b class="s badh"></b><svg><use href="#i-eye"/></svg>B.Adhesive</li>
        <li><b class="s fpas"></b><svg><use href="#i-eye"/></svg>F.Paste</li>
        <li><b class="s bpas"></b><svg><use href="#i-eye"/></svg>B.Paste</li>
        <li><b class="s fsil"></b><svg><use href="#i-eye"/></svg>F.Silkscreen</li>
        <li><b class="s bsil"></b><svg><use href="#i-eye"/></svg>B.Silkscreen</li>
        <li><b class="s fmsk"></b><svg><use href="#i-eye"/></svg>F.Mask</li>
        <li><b class="s bmsk"></b><svg><use href="#i-eye"/></svg>B.Mask</li>
        <li><b class="s ugry"></b><svg><use href="#i-eye"/></svg>User.Drawings</li>
        <li><b class="s ublu"></b><svg><use href="#i-eye"/></svg>User.Comments</li>
        <li><b class="s eco1"></b><svg><use href="#i-eye"/></svg>User.Eco1</li>
        <li><b class="s eco2"></b><svg><use href="#i-eye"/></svg>User.Eco2</li>
        <li><b class="s edge"></b><svg><use href="#i-eye"/></svg>Edge.Cuts</li>
        <li><b class="s mag"></b><svg><use href="#i-eye"/></svg>Margin</li>
        <li><b class="s mag"></b><svg><use href="#i-eye"/></svg>F.Courtyard</li>
        <li><b class="s cyan"></b><svg><use href="#i-eye"/></svg>B.Courtyard</li>
        <li><b class="s ffab"></b><svg><use href="#i-eye"/></svg>F.Fab</li>
        <li><b class="s bfab"></b><svg><use href="#i-eye"/></svg>B.Fab</li>
        <li><b class="s ugry"></b><svg><use href="#i-eye"/></svg>User.1</li>
        <li><b class="s ublu"></b><svg><use href="#i-eye"/></svg>User.2</li>
      </ul>
      <div class="scroll"><i></i></div>
    </div>
    <div class="layeropts"><i class="tri"></i>レイヤー表示オプション</div>
    <div class="presets">
      <label>プリセット (Ctrl+Tab):</label>
      <div class="sel wide">すべてのレイヤー<svg><use href="#i-chev"/></svg></div>
      <label>ビューポート(Shift+Tab):</label>
      <div class="sel wide">---<svg><use href="#i-chev"/></svg></div>
    </div>
    <h2 class="phead filt">フィルター選択</h2>
    <div class="filters">
      <span><b class="cb"><svg><use href="#i-check"/></svg></b>すべてのアイテム</span><span class="lockd"><b class="cb off"></b>ロックしたアイテム</span>
      <span><b class="cb"><svg><use href="#i-check"/></svg></b>フットプリント</span><span><b class="cb"><svg><use href="#i-check"/></svg></b>テキスト</span>
      <span><b class="cb"><svg><use href="#i-check"/></svg></b>配線</span><span><b class="cb"><svg><use href="#i-check"/></svg></b>ビア</span>
      <span><b class="cb"><svg><use href="#i-check"/></svg></b>パッド</span><span><b class="cb"><svg><use href="#i-check"/></svg></b>図形</span>
      <span><b class="cb"><svg><use href="#i-check"/></svg></b>ゾーン</span><span><b class="cb"><svg><use href="#i-check"/></svg></b>ルールエリア</span>
      <span><b class="cb"><svg><use href="#i-check"/></svg></b>寸法</span><span><b class="cb"><svg><use href="#i-check"/></svg></b>その他のアイテム</span>
    </div>
  </section>
</div>

<div class="msgpanel">
  <span>タイプ</span><span>ネット</span><span>解決されたネットクラス</span><span>優先度</span><span>レイヤー</span><span>塗りつぶしモード</span><span>塗りつぶし領域</span><span>最小クリアランス: 0.5000 mm</span><span>角の数</span>
  <span>導体ゾーン</span><span>GND</span><span>PWR</span><span>0</span><span>F.Cu</span><span>実線</span><span>0.0000 mm<sup>2</sup></span><span>(ゾーン から)</span><span>0</span>
</div>

<footer class="status">
  <span class="c1">すべてのゾーンの導体塗りつぶしを更新 (B)</span>
  <span class="c2">Z 2.22</span>
  <span class="c3">X 208.5000&nbsp; Y 69.0000</span>
  <span class="c4">dx 208.5000&nbsp; dy 69.0000&nbsp; dist 219.6207</span>
  <span class="c5">グリッド 0.5000</span>
  <span class="c6"></span>
</footer>

<!-- context menu -->
<div class="menu mainmenu">
  <div class="mi"><i class="ic"></i><span class="lbl">選択</span><svg class="more"><use href="#i-more"/></svg></div>
  <div class="msep tight"></div>
  <div class="mi"><svg class="ic"><use href="#i-move"/></svg><span class="lbl">移動</span><span class="key">M</span></div>
  <div class="mi"><svg class="ic"><use href="#i-rotl"/></svg><span class="lbl">左回転</span><span class="key">R</span></div>
  <div class="mi"><svg class="ic"><use href="#i-rotr"/></svg><span class="lbl">右回転</span><span class="key">Shift+R</span></div>
  <div class="mi"><svg class="ic"><use href="#i-flip"/></svg><span class="lbl">配置面を変更/反転</span><span class="key">F</span></div>
  <div class="mi"><svg class="ic"><use href="#i-fliph"/></svg><span class="lbl">水平反転</span></div>
  <div class="mi"><svg class="ic"><use href="#i-flipv"/></svg><span class="lbl">垂直反転</span></div>
  <div class="mi"><svg class="ic"><use href="#i-pencil"/></svg><span class="lbl nar2">プロパティ...</span><span class="key">E</span></div>
  <div class="mi"><svg class="ic"><use href="#i-net"/></svg><span class="lbl nar1">ネットクラス割り当て...</span></div>
  <div class="msep"></div>
  <div class="mi"><svg class="ic"><use href="#i-corner"/></svg><span class="lbl">角を作成</span><span class="key">挿入</span></div>
  <div class="msep"></div>
  <div class="mi"><svg class="ic"><use href="#i-wand"/></svg><span class="lbl">位置決めツール</span><svg class="more"><use href="#i-more"/></svg></div>
  <div class="mi"><svg class="ic"><use href="#i-lock"/></svg><span class="lbl">ロック</span><svg class="more"><use href="#i-more"/></svg></div>
  <div class="mi hov"><svg class="ic"><use href="#i-zone"/></svg><span class="lbl nar2">ゾーン</span><svg class="more"><use href="#i-more"/></svg></div>
  <div class="mi"><svg class="ic"><use href="#i-netinsp"/></svg><span class="lbl nar1">ネット検査ツール</span><svg class="more"><use href="#i-more"/></svg></div>
  <div class="mi"><svg class="ic"><use href="#i-create"/></svg><span class="lbl">選択対象から作成</span><svg class="more"><use href="#i-more"/></svg></div>
  <div class="mi"><svg class="ic"><use href="#i-group"/></svg><span class="lbl nar2">グループ化</span><svg class="more"><use href="#i-more"/></svg></div>
  <div class="msep"></div>
  <div class="mi"><svg class="ic"><use href="#i-cut"/></svg><span class="lbl">切り取り</span><span class="key">Ctrl+X</span></div>
  <div class="mi"><svg class="ic"><use href="#i-copy"/></svg><span class="lbl">コピー</span><span class="key">Ctrl+C</span></div>
  <div class="mi"><svg class="ic"><use href="#i-paste"/></svg><span class="lbl">貼り付け</span><span class="key">Ctrl+V</span></div>
  <div class="mi"><svg class="ic"><use href="#i-pastesp"/></svg><span class="lbl">特殊な貼り付け...</span></div>
  <div class="mi"><svg class="ic"><use href="#i-dup"/></svg><span class="lbl">複製</span><span class="key">Ctrl+D</span></div>
  <div class="mi"><svg class="ic"><use href="#i-trash"/></svg><span class="lbl">削除</span><span class="key">削除</span></div>
  <div class="msep"></div>
  <div class="mi short"><i class="ic"></i><span class="lbl">すべて選択</span><span class="key">Ctrl+A</span></div>
  <div class="mi short"><i class="ic"></i><span class="lbl">すべて選択解除</span><span class="key">Ctrl+Shift+A</span></div>
  <div class="msep last"></div>
  <div class="mi"><svg class="ic"><use href="#i-zcur"/></svg><span class="lbl nar1">ズーム</span><svg class="more"><use href="#i-more"/></svg></div>
  <div class="mi"><svg class="ic"><use href="#i-gridm"/></svg><span class="lbl">グリッド</span><svg class="more"><use href="#i-more"/></svg></div>
</div>

<div class="menu submenu">
  <div class="mi"><svg class="ic"><use href="#i-bucket"/></svg><span class="lbl">選択したゾーンの塗りつぶしを更新</span></div>
  <div class="mi hov"><svg class="ic"><use href="#i-bucket"/></svg><span class="lbl">すべてのゾーンを塗りつぶし</span><span class="key">B</span></div>
  <div class="mi"><svg class="ic"><use href="#i-unfill"/></svg><span class="lbl">選択したゾーンの塗りつぶしを削除</span></div>
  <div class="mi"><svg class="ic"><use href="#i-unfill"/></svg><span class="lbl">すべてのゾーンの塗りつぶしを削除</span><span class="key">Ctrl+B</span></div>
  <div class="msep"></div>
  <div class="mi short off"><i class="ic"></i><span class="lbl nar2">ゾーンをマージ</span></div>
  <div class="mi"><svg class="ic"><use href="#i-zonedup"/></svg><span class="lbl">レイヤー上にゾーンを複製...</span></div>
  <div class="mi"><svg class="ic"><use href="#i-cutout"/></svg><span class="lbl">ゾーンの切り抜きを追加</span><span class="key">Shift+C</span></div>
  <div class="mi"><svg class="ic"><use href="#i-zone"/></svg><span class="lbl">同様のゾーンを追加</span><span class="key">Ctrl+Shift+.</span></div>
</div>
</body>
</html>
```

FILE: styles.css
```css
* {
  box-sizing: border-box;
}
html, body {
  margin: 0;
  height: 100%;
}
body {
  position: relative;
  width: 1920px;
  height: 1021px;
  overflow: hidden;
  display: flex;
  flex-direction: column;
  background: #f0f0f0;
  color: #111;
  font-family: "Noto Sans", "Noto Sans CJK JP", sans-serif;
  font-size: 14px;
  font-feature-settings: "palt";
}
.sheet {
  display: none;
}
.svgt {
  font-family: "Liberation Sans", sans-serif;
}
button {
  border: 0;
  padding: 0;
  background: none;
  display: flex;
  align-items: center;
  justify-content: center;
}

/* title + menu */
.titlebar {
  height: 29px;
  flex: none;
  display: flex;
  align-items: center;
  background: linear-gradient(90deg, #f3f4f5 0%, #edf3f7 30%, #ebf3fa 50%, #edf3f7 68%, #f2f2f2 80%);
}
.appicon {
  width: 20px;
  height: 20px;
  margin: 0 6px 0 2px;
}
.apptitle {
  font-size: 14px;
  letter-spacing: -0.25px;
}
.winbtns {
  margin-left: auto;
  display: flex;
  gap: 47px;
  padding-right: 26px;
}
.winbtns svg {
  width: 12px;
  height: 12px;
}
.menubar {
  height: 23px;
  flex: none;
  background: #fff;
  display: flex;
  align-items: center;
  font-size: 14px;
  letter-spacing: -0.5px;
  white-space: nowrap;
}
.menubar span {
  flex: none;
}
.m1 { width: 91px; padding-left: 9px; }
.m2 { width: 70px; }
.m3 { width: 71px; }
.m4 { width: 69px; }
.m5 { width: 70px; }
.m6 { width: 66px; }
.m7 { width: 74px; }
.m8 { width: 67px; }

/* top toolbars */
.toolbar {
  height: 46px;
  flex: none;
  background: #efefef;
  display: flex;
  align-items: center;
  padding-left: 4.5px;
}
.tb {
  width: 41px;
  height: 46px;
  flex: none;
}
.tb svg {
  width: 30px;
  height: 30px;
}
.dark { color: #555; }
.pale { color: #c4c4c4; }
.vs {
  width: 1px;
  height: 34px;
  margin: 0 4px;
  background: #aaa;
  flex: none;
}
.optbar {
  height: 44px;
  flex: none;
  background: #dadada;
}
.opts {
  width: 1034px;
  height: 44px;
  background: #efefef;
  display: flex;
  align-items: center;
  padding-left: 7px;
}
.sel {
  height: 27px;
  flex: none;
  display: flex;
  align-items: center;
  justify-content: space-between;
  padding: 0 6px 0 4px;
  background: #fdfdfd;
  border: 1px solid #d6d6d6;
  border-bottom-color: #aaa;
  border-radius: 4px;
  font-size: 14px;
  white-space: nowrap;
}
.sel svg {
  width: 12px;
  height: 12px;
  margin-left: auto;
  flex: none;
}
.w1 { width: 199px; letter-spacing: -0.65px; }
.w2 { width: 212px; letter-spacing: -0.7px; }
.w3 { width: 156px; padding-left: 8px; }
.w4 { width: 208px; padding-left: 4px; }
.w5 { width: 111px; margin-left: 2px; letter-spacing: -0.2px; }
.chip {
  width: 13px;
  height: 13px;
  margin-right: 5px;
  background: #c83434;
  border: 1px solid #555;
}
.lenbtn {
  width: 38px;
  height: 38px;
  margin-left: 4px;
  flex: none;
  background: #b3d7f5;
  border: 1.5px solid #0f7fd8;
}
.lenbtn svg {
  width: 30px;
  height: 30px;
}
.hs {
  width: 1px;
  height: 32px;
  margin: 0 6px 0 5px;
  background: #aaa;
  flex: none;
}
.pair {
  width: 30px;
  height: 30px;
  margin: 0 4px 0 7px;
  flex: none;
}

/* working area */
.main {
  height: 810px;
  flex: none;
  display: flex;
  background: #dadada;
}
.lefttb {
  width: 44px;
  flex: none;
  padding-top: 4.5px;
  background: #f0f0f0;
  border-right: 1px solid #999;
  display: flex;
  flex-direction: column;
  align-items: center;
}
.lb {
  width: 38px;
  height: 38px;
  margin: 1.5px 0;
  flex: none;
  margin-left: -1px;
  border: 1.5px solid transparent;
}
.lb.on {
  background: #b3d7f5;
  border-color: #0f7fd8;
}
.lb svg {
  width: 30px;
  height: 30px;
}
.ls {
  width: 34px;
  height: 1px;
  margin: 4px 0;
  flex: none;
  background: #aaa;
}
.canvas {
  width: 1605px;
  flex: none;
}
.canvas svg {
  display: block;
  width: 1605px;
  height: 810px;
}
.edge {
  fill: none;
  stroke: #c9ccc8;
  stroke-width: 1;
}
.hdl {
  fill: #fff;
  stroke: #ccc;
  stroke-width: 0.5;
}
.pcbt {
  font-family: "DejaVu Sans", sans-serif;
  font-size: 12.5px;
  font-weight: 300;
}
.pcbt.small {
  font-size: 11px;
}
.righttb {
  width: 41px;
  margin-right: 5px;
  flex: none;
  background: #f0f0f0;
}
.righttb svg {
  display: block;
  width: 41px;
  height: 810px;
}

/* side panel */
.panel {
  width: 225px;
  flex: none;
  background: #f0f0f0;
  font-size: 13px;
  display: flex;
  flex-direction: column;
}
.phead {
  height: 26px;
  margin: 0;
  flex: none;
  padding-left: 5px;
  background: #b8b8b8;
  font-size: 14px;
  font-weight: 400;
  line-height: 24px;
}
.phead.filt {
  margin-top: 5px;
}
.tabs {
  height: 27px;
  margin-top: 5px;
  flex: none;
  display: flex;
  padding-left: 1px;
  border-bottom: 1px solid #e4e4e4;
  font-size: 13.5px;
  letter-spacing: -0.6px;
  white-space: nowrap;
}
.tab {
  display: flex;
  align-items: center;
  justify-content: center;
  width: 62px;
  border: 1px solid #e4e4e4;
  border-bottom: 0;
}
.tab.cur {
  background: #f8f8f8;
}
.t2 { width: 74px; }
.t3 { width: 57px; }
.layerbox {
  height: 442px;
  margin-left: 4px;
  margin-top: 2px;
  flex: none;
  display: flex;
  font-size: 12.6px;
}
.layers {
  width: 196px;
  margin: 0;
  padding: 0;
  list-style: none;
}
.layers li {
  height: 20px;
  display: flex;
  align-items: center;
  padding: 1px 0 0 15px;
  white-space: nowrap;
}
.layers li.cur {
  position: relative;
  background: #e0e0e0;
}
.layers li.cur::before {
  content: "";
  position: absolute;
  left: 5px;
  top: 6px;
  border-left: 5px solid #4a5cf0;
  border-top: 4px solid transparent;
  border-bottom: 4px solid transparent;
}
.layers svg {
  width: 16px;
  height: 16px;
  margin: 0 6px 0 5px;
  flex: none;
}
.s {
  width: 13px;
  height: 13px;
  flex: none;
}
.fcu { background: #c83434; }
.bcu { background: #4d7fc4; }
.fadh { background: #840084; }
.badh { background: #000084; }
.fpas { background: #a49088; }
.bpas { background: #00b2b2; }
.fsil { background: #f2eda1; }
.bsil { background: #e8b2a7; }
.fmsk { background: repeating-conic-gradient(#5c2a6c 0 25%, #4f2560 0 50%) 0 0 / 8px 8px; }
.bmsk { background: repeating-conic-gradient(#0c6a5c 0 25%, #0a5a4e 0 50%) 0 0 / 8px 8px; }
.ugry { background: #c2c2c2; }
.ublu { background: #5990dc; }
.eco1 { background: #b4dbd2; }
.eco2 { background: #d8c852; }
.edge.s { background: #d0d2cd; }
.mag { background: #ff26e2; }
.cyan { background: #26e9ff; }
.ffab { background: #afafaf; }
.bfab { background: #58618a; }
.scroll {
  width: 16px;
  border-left: 1px solid #e8e8e8;
  padding: 21px 0 0 7px;
}
.scroll i {
  display: block;
  width: 6px;
  height: 298px;
  background: #888;
}
.layeropts {
  height: 22px;
  margin: 5px 9px 0 9px;
  flex: none;
  display: flex;
  align-items: center;
  padding: 0 0 3px 8px;
  background: #fdfdfd;
  font-size: 13px;
}
.tri {
  border-left: 5px solid #111;
  border-top: 5px solid transparent;
  border-bottom: 5px solid transparent;
  margin-right: 4px;
}
.presets {
  height: 118px;
  margin-top: 2px;
  flex: none;
  padding: 10px 8px 0 7px;
  border-top: 1px solid #dadada;
}
.presets label {
  display: block;
  height: 16px;
  line-height: 16px;
  font-size: 12.5px;
}
.presets .sel {
  margin: 3px 0 5px;
}
.sel.wide {
  width: 210px;
  padding: 0 6px 2px 4px;
  font-size: 14px;
}
.filters {
  display: grid;
  grid-template-columns: 115px 1fr;
  grid-auto-rows: 20px;
  padding: 4px 0 0 5px;
  font-size: 12.5px;
  letter-spacing: -1px;
  white-space: nowrap;
}
.filters span {
  display: flex;
  align-items: center;
}
.filters .lockd {
  letter-spacing: -1.4px;
}
.cb {
  width: 16px;
  height: 16px;
  margin-right: 3px;
  flex: none;
  border-radius: 4px;
  background: #0067c0;
}
.cb svg {
  display: block;
  width: 16px;
  height: 16px;
}
.cb.off {
  background: #f4f4f4;
  border: 1px solid #555;
}

/* bottom */
.msgpanel {
  height: 40px;
  flex: none;
  display: grid;
  grid-template-columns: 100px 70px 167px 83px 65px 129px 117px 214px auto;
  grid-template-rows: 20px 20px;
  padding: 0 0 0 14px;
  background: #f0f0f0;
  font-size: 13px;
  white-space: nowrap;
}
.msgpanel span {
  line-height: 20px;
}
.msgpanel sup {
  font-size: 9px;
  line-height: 0;
}
.status {
  height: 27px;
  flex: none;
  display: flex;
  background: #f0f0f0;
  border-top: 1px solid #d0d0d0;
  border-bottom: 1px solid #aaa;
  font-size: 13px;
  white-space: nowrap;
}
.status span {
  flex: none;
  padding-left: 4px;
  line-height: 24px;
  border-right: 1px solid #d8d8d8;
}
.c1 { width: 579px; padding-left: 3px !important; letter-spacing: 0.3px; }
.c2 { width: 97px; }
.c3 { width: 203px; }
.c4 { width: 321px; }
.c5 { width: 512px; }
.c6 { border-right: 0 !important; }

/* popups */
.menu {
  position: absolute;
  background: #f9f9f9;
  border-radius: 8px;
  box-shadow: 0 0 0 1px #e2e2e2, 0 3px 10px rgba(0, 0, 0, .25);
  font-size: 14px;
}
.mainmenu {
  left: 1355px;
  top: 135px;
  width: 323px;
  height: 883px;
}
.submenu {
  left: 982px;
  top: 545px;
  width: 373px;
  height: 267px;
  padding-top: 3px;
}
.mi {
  height: 32px;
  margin: 0 6px 0 5px;
  padding: 0 12px 0 4px;
  border-radius: 5px;
  display: flex;
  align-items: center;
  white-space: nowrap;
}
.mi.short {
  height: 26px;
}
.mi.hov {
  background: #f0f0f0;
}
.mi.off {
  color: #b0b0b0;
}
.ic {
  width: 24px;
  height: 24px;
  flex: none;
}
.lbl {
  margin-left: 17px;
  padding-bottom: 2px;
  flex: 1;
}
.submenu .lbl {
  margin-left: 18px;
  letter-spacing: -1px;
}
.lbl.nar1 {
  letter-spacing: -1px;
}
.lbl.nar2,
.submenu .lbl.nar2 {
  letter-spacing: -1.6px;
}
.key {
  margin-right: 13px;
  padding-bottom: 2px;
  font-size: 14.7px;
}
.more {
  width: 8px;
  height: 12px;
  flex: none;
}
.msep {
  height: 1px;
  margin: 4px 10px 6px 9px;
  background: #dcdcdc;
}
.msep.tight {
  margin-top: 1px;
}
.msep.last {
  margin: 4px 10px 5px 9px;
}
```
